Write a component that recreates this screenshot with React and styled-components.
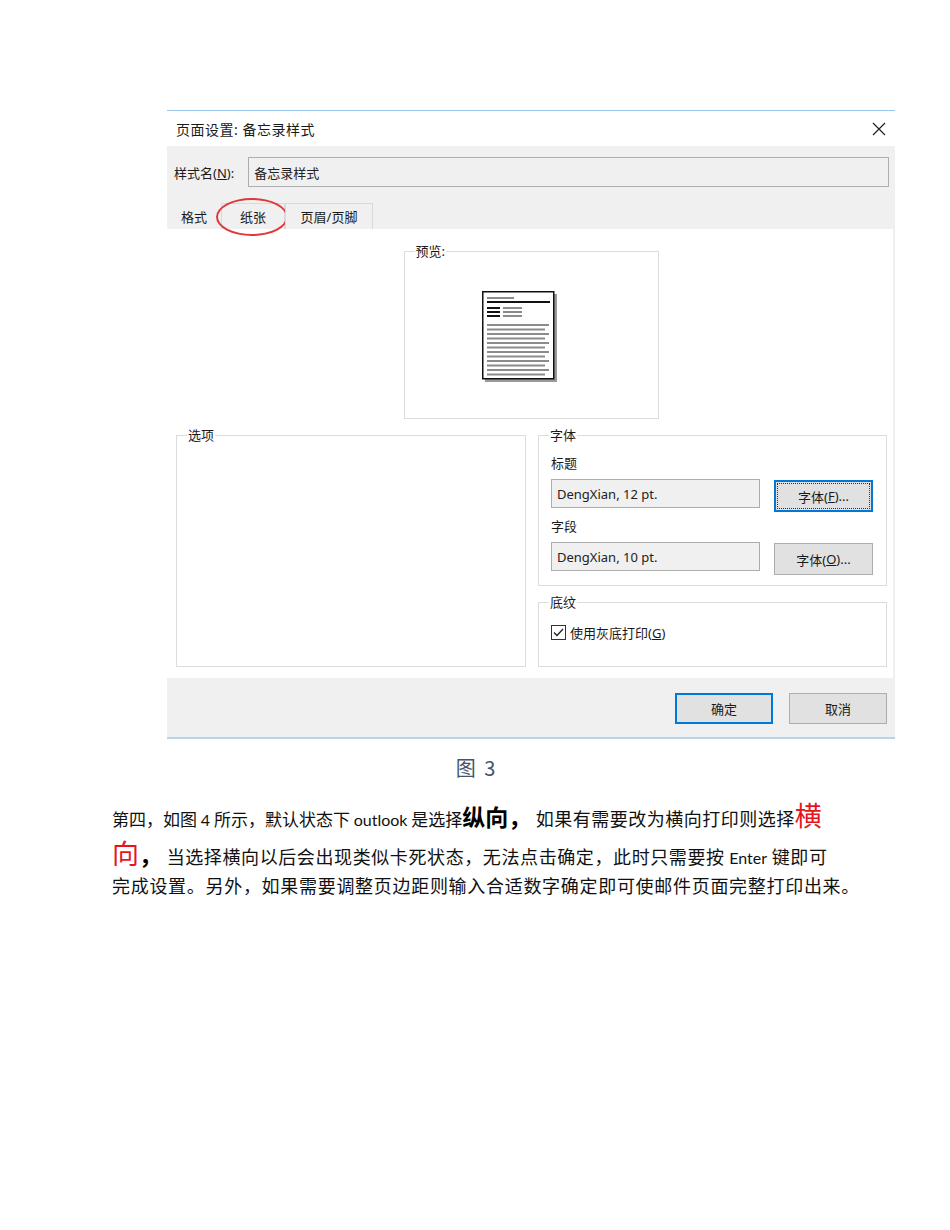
import React from "react";
import styled, { createGlobalStyle } from "styled-components";

const GlobalStyle = createGlobalStyle`
  body {
    margin: 0;
    background: #ffffff;
    font-family: "Noto Sans", "Noto Sans CJK SC", sans-serif;
  }
`;

const Page = styled.div`
  width: 950px;
  min-height: 1230px;
  padding-top: 110px;
  box-sizing: border-box;
`;

const Dialog = styled.div`
  margin-left: 167px;
  width: 728px;
  border-top: 1px solid #99c6ea;
  border-bottom: 2px solid #b7d3ea;
  background: #f0f0f0;
  color: #1a1a1a;
  font-size: 13px;
  font-family: "Noto Sans", "Noto Sans CJK SC", sans-serif;
`;

const TitleBar = styled.div`
  height: 35px;
  background: #ffffff;
  display: flex;
  align-items: center;
  justify-content: space-between;
  padding: 0 9px 0 9px;
  font-size: 14px;
  letter-spacing: 0.5px;
`;

const CloseIcon = () => (
  <svg width="14" height="14" viewBox="0 0 14 14">
    <path d="M1 1 L13 13 M13 1 L1 13" stroke="#222" strokeWidth="1.2" fill="none" />
  </svg>
);

const StyleRow = styled.div`
  display: flex;
  align-items: center;
  padding: 11px 6px 0 7px;
  gap: 14px;
`;

const Label = styled.span`
  white-space: nowrap;
`;

const Key = styled.span`
  text-decoration: underline;
`;

const TextBox = styled.div`
  box-sizing: border-box;
  height: ${(p) => p.h || 29}px;
  width: ${(p) => (p.w ? `${p.w}px` : "auto")};
  flex: ${(p) => (p.w ? "none" : "1")};
  background: #f0f0f0;
  border: 1px solid #adadad;
  display: flex;
  align-items: center;
  padding-left: 5px;
  color: #222;
`;

const TabStrip = styled.div`
  display: flex;
  align-items: flex-end;
  height: 27px;
  margin-top: 15px;
  padding-left: 5px;
`;

const Tab = styled.div`
  position: relative;
  box-sizing: border-box;
  height: 26px;
  display: flex;
  align-items: center;
  justify-content: center;
  width: ${(p) => p.w}px;
  border: ${(p) => (p.active ? "none" : "1px solid #d9d9d9")};
  border-bottom: none;
  margin-left: ${(p) => p.ml || 0}px;
  background: #f0f0f0;
`;

const RedRing = styled.div`
  position: absolute;
  left: -6px;
  top: -6px;
  width: 72px;
  height: 38px;
  box-sizing: border-box;
  border: 2.5px solid #e0393b;
  border-radius: 50%;
  pointer-events: none;
`;

const Panel = styled.div`
  background: #ffffff;
  margin-right: 2px;
  height: 449px;
  box-sizing: border-box;
  padding: 22px 6px 0 9px;
  display: flex;
  flex-direction: column;
`;

const Group = styled.div`
  position: relative;
  box-sizing: border-box;
  flex: none;
  border: 1px solid #dcdcdc;
  width: ${(p) => p.w}px;
  height: ${(p) => p.h}px;
  padding: ${(p) => p.pad || "0"};
`;

const GroupTitle = styled.span`
  position: absolute;
  top: -10px;
  left: 10px;
  background: #ffffff;
  padding: 0 1px;
  line-height: 18px;
`;

const PreviewWrap = styled.div`
  display: flex;
  justify-content: center;
  padding-right: 1px;
`;

const PreviewBody = styled.div`
  padding: 39px 0 0 77px;
`;

const LowerRow = styled.div`
  display: flex;
  gap: 12px;
  margin-top: 16px;
`;

const RightCol = styled.div`
  display: flex;
  flex-direction: column;
  gap: 16px;
`;

const FieldLabel = styled.div`
  line-height: 18px;
  margin-bottom: 7px;
  margin-top: ${(p) => p.mt || 0}px;
`;

const FieldRow = styled.div`
  display: flex;
  align-items: flex-start;
  gap: 14px;
`;

const Button = styled.button`
  box-sizing: border-box;
  width: ${(p) => p.w || 99}px;
  height: ${(p) => p.h || 32}px;
  margin-top: ${(p) => p.mt || 0}px;
  background: #e1e1e1;
  border: ${(p) => (p.primary ? "2px solid #0078d7" : "1px solid #adadad")};
  font-family: inherit;
  font-size: 13px;
  color: #1a1a1a;
  padding: 0;
  display: flex;
  align-items: center;
  justify-content: center;
  outline: ${(p) => (p.focus ? "1px dotted #333" : "none")};
  outline-offset: -4px;
`;

const CheckRow = styled.div`
  display: flex;
  align-items: center;
  gap: 4px;
  margin-top: 20px;
`;

const CheckBox = () => (
  <svg width="15" height="15" viewBox="0 0 15 15">
    <rect x="0.5" y="0.5" width="14" height="14" fill="#fff" stroke="#333" />
    <path d="M3 7.5 L6 10.5 L12 4" stroke="#222" strokeWidth="1.3" fill="none" />
  </svg>
);

const Footer = styled.div`
  height: 59px;
  display: flex;
  justify-content: flex-end;
  align-items: flex-start;
  gap: 16px;
  padding: 15px 8px 0 0;
  box-sizing: border-box;
`;

const Caption = styled.div`
  margin-top: 14px;
  text-align: center;
  padding-left: 3px;
  line-height: 30px;
  font-size: 20px;
  color: #44546a;
  font-family: "Noto Sans CJK SC", sans-serif;
  letter-spacing: 2px;
`;

const Paragraph = styled.div`
  margin-top: 11px;
  padding-left: 112px;
  font-family: Lato, "Noto Sans CJK SC", sans-serif;
  font-size: 16px;
  color: #111;
  white-space: nowrap;
`;

const Line = styled.div`
  height: ${(p) => p.h}px;
  line-height: ${(p) => p.h}px;
`;

const Cjk = styled.span`
  font-family: "Noto Sans CJK SC", sans-serif;
  font-size: ${(p) => p.$size || 18}px;
  letter-spacing: ${(p) => p.$ls ?? 0.6}px;
`;

const Strong = styled.span`
  font-family: "Noto Sans CJK SC", sans-serif;
  font-weight: 700;
  font-size: 23px;
  color: #000;
`;

const Red = styled.span`
  font-family: "Noto Sans CJK SC", sans-serif;
  font-size: 27px;
  color: #e8141b;
`;

const PageGlyph = () => (
  <svg width="76" height="92" viewBox="0 0 76 92">
    <rect x="3" y="3" width="72" height="88" fill="#9a9a9a" />
    <rect x="0.75" y="0.75" width="71" height="87" fill="#fff" stroke="#111" strokeWidth="1.5" />
    <rect x="5" y="6" width="27" height="2" fill="#8c8c8c" />
    <rect x="5" y="10" width="63" height="2" fill="#111" />
    {[16, 20, 24].map((y) => (
      <g key={y}>
        <rect x="5" y={y} width="13" height="2" fill="#111" />
        <rect x="21" y={y} width="19" height="2" fill="#8c8c8c" />
      </g>
    ))}
    {Array.from({ length: 12 }).map((_, i) => (
      <rect key={i} x="5" y={33 + i * 4.5} width={i % 2 ? 58 : 62} height="2" fill="#8c8c8c" />
    ))}
  </svg>
);

export default function App() {
  return (
    <Page>
      <GlobalStyle />
      <Dialog>
        <TitleBar>
          <span>页面设置: 备忘录样式</span>
          <CloseIcon />
        </TitleBar>
        <StyleRow>
          <Label>
            样式名(<Key>N</Key>):
          </Label>
          <TextBox h={30}>备忘录样式</TextBox>
        </StyleRow>
        <TabStrip>
          <Tab active w={44}>格式</Tab>
          <Tab w={64} ml={5}>
            纸张
            <RedRing />
          </Tab>
          <Tab w={88}>页眉/页脚</Tab>
        </TabStrip>
        <Panel>
          <PreviewWrap>
            <Group w={255} h={168}>
              <GroupTitle>预览:</GroupTitle>
              <PreviewBody>
                <PageGlyph />
              </PreviewBody>
            </Group>
          </PreviewWrap>
          <LowerRow>
            <Group w={350} h={232}>
              <GroupTitle>选项</GroupTitle>
            </Group>
            <RightCol>
              <Group w={349} h={151} pad="18px 12px 0 12px">
                <GroupTitle>字体</GroupTitle>
                <FieldLabel>标题</FieldLabel>
                <FieldRow>
                  <TextBox w={209}>DengXian, 12 pt.</TextBox>
                  <Button primary focus mt={1}>
                    字体(<Key>F</Key>)...
                  </Button>
                </FieldRow>
                <FieldLabel mt={5}>字段</FieldLabel>
                <FieldRow>
                  <TextBox w={209}>DengXian, 10 pt.</TextBox>
                  <Button mt={1}>
                    字体(<Key>O</Key>)...
                  </Button>
                </FieldRow>
              </Group>
              <Group w={349} h={65} pad="0 12px">
                <GroupTitle>底纹</GroupTitle>
                <CheckRow>
                  <CheckBox />
                  <span>
                    使用灰底打印(<Key>G</Key>)
                  </span>
                </CheckRow>
              </Group>
            </RightCol>
          </LowerRow>
        </Panel>
        <Footer>
          <Button primary w={98} h={31}>确定</Button>
          <Button w={98} h={31}>取消</Button>
        </Footer>
      </Dialog>
      <Caption>图 3</Caption>
      <Paragraph>
        <Line h={42}>
          <Cjk $size={17} $ls={0}>第四，如图 </Cjk>4
          <Cjk $size={17} $ls={0}> 所示，默认状态下 </Cjk>outlook
          <Cjk $size={17} $ls={0}> 是选择</Cjk>
          <Strong>纵向，</Strong>
          <Cjk $ls={0.5}> 如果有需要改为横向打印则选择</Cjk>
          <Red>横</Red>
        </Line>
        <Line h={34}>
          <Red>向</Red>
          <Strong>，</Strong>
          <Cjk> 当选择横向以后会出现类似卡死状态，无法点击确定，此时只需要按 </Cjk>Enter
          <Cjk> 键即可</Cjk>
        </Line>
        <Line h={30}>
          <Cjk $ls={0.7}>完成设置。另外，如果需要调整页边距则输入合适数字确定即可使邮件页面完整打印出来。</Cjk>
        </Line>
      </Paragraph>
    </Page>
  );
}
